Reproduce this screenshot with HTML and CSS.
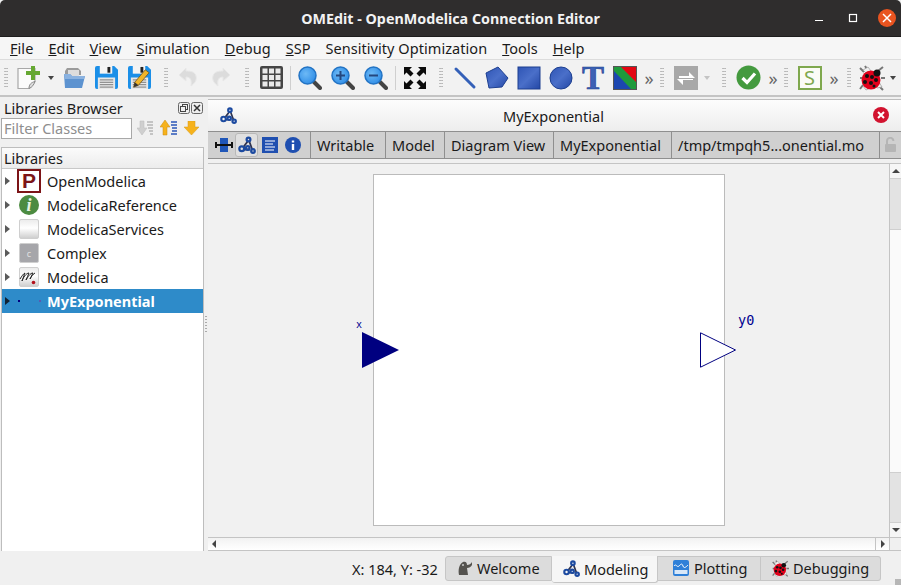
FILE: index.html
```html
<!DOCTYPE html>
<html lang="en">
<head>
    <meta charset="UTF-8">
    <title>OMEdit - OpenModelica Connection Editor</title>
    <link rel="stylesheet" href="styles.css">
</head>
<body>
    <svg class="defs" width="0" height="0">
        <defs>
            <linearGradient id="blue" x1="0" y1="0" x2="1" y2="1">
                <stop offset="0" stop-color="#2f55b5"/>
                <stop offset="0.5" stop-color="#4a6fc9"/>
                <stop offset="1" stop-color="#2347a5"/>
            </linearGradient>
            <radialGradient id="lens" cx="0.4" cy="0.4" r="0.7">
                <stop offset="0" stop-color="#6db9f5"/>
                <stop offset="1" stop-color="#2a8ae6"/>
            </radialGradient>
            <symbol id="conn" viewBox="0 0 24 24">
                <path d="M13 7 7 15M15 7 19 18M8 18h8" stroke="#2f3450" stroke-width="2.400" fill="none"/>
                <g fill="none" stroke="#1c4aa0" stroke-width="3">
                    <circle cx="14" cy="4.500" r="2.500"/>
                    <circle cx="5" cy="17" r="3.200"/>
                    <circle cx="13" cy="16" r="2.400"/>
                    <circle cx="20" cy="20" r="2.400"/>
                </g>
            </symbol>
            <symbol id="lady" viewBox="0 0 26 26">
                <path d="M5 7 1 3M8 4 6 1M19 6 24 2M4 20 1 24M20 21 24 25M22 13h4M1 13h3" stroke="#777" stroke-width="2"/>
                <path d="M4 5 9 2l3 4-4 3zM4 21l4-3 3 5-4 2zM18 23l-2-3 4-3 3 5z" fill="#eee" stroke="#999" stroke-width=".7"/>
                <circle cx="12" cy="15" r="9.500" fill="#e3001b"/>
                <circle cx="18" cy="8" r="3.500" fill="#111"/>
                <g fill="#111">
                    <circle cx="8" cy="11" r="2"/><circle cx="13" cy="12" r="2"/><circle cx="6" cy="17" r="2"/>
                    <circle cx="12" cy="18" r="2"/><circle cx="17" cy="15" r="2"/><circle cx="15" cy="21" r="1.500"/>
                </g>
            </symbol>
            <symbol id="floppy" viewBox="0 0 24 24">
                <path d="M2 0h18l4 4v18a2 2 0 0 1-2 2H2a2 2 0 0 1-2-2V2a2 2 0 0 1 2-2z" fill="#1b8fe8"/>
                <path d="M5 0h13v8H5z" fill="#f4f4f4"/>
                <path d="M13 1h3v6h-3z" fill="#222"/>
                <path d="M3 12h18v12H3z" fill="#e8e8e8"/>
                <path d="M5 14.500h14M5 17h14M5 19.500h14M5 22h14" stroke="#777" stroke-width="1"/>
            </symbol>
        </defs>
    </svg>

    <header class="titlebar">
        <span class="title">OMEdit - OpenModelica Connection Editor</span>
        <div class="winbtns">
            <svg class="winmin" width="12" height="12" viewBox="0 0 12 12"><path d="M2 8.500h8" stroke="#fff" stroke-width="1"/></svg>
            <svg width="12" height="12" viewBox="0 0 12 12"><rect x="2.500" y="2.500" width="7" height="7" fill="none" stroke="#fff" stroke-width="1.200"/></svg>
            <span class="winclose"><svg width="10" height="10" viewBox="0 0 10 10"><path d="M1 1l8 8M9 1l-8 8" stroke="#fff" stroke-width="1.500"/></svg></span>
        </div>
    </header>

    <nav class="menubar">
        <a><u>F</u>ile</a>
        <a><u>E</u>dit</a>
        <a><u>V</u>iew</a>
        <a><u>S</u>imulation</a>
        <a><u>D</u>ebug</a>
        <a><u>S</u>SP</a>
        <a>Sensitivity Optimization</a>
        <a><u>T</u>ools</a>
        <a><u>H</u>elp</a>
    </nav>

    <div class="toolbar">
        <span class="grip first"></span>
        <span class="tool tool-new">
            <svg width="24" height="24" viewBox="0 0 24 24">
                <path d="M1 2.500h17v13l-6 7H1z" fill="#fbfbfb" stroke="#a8a8a8" stroke-width="1.200"/>
                <path d="M12 22.500c0-4 2-6 6-7-1 3-3 6-6 7z" fill="#ddd" stroke="#888"/>
                <path d="M14 0h4v5h5v4h-5v5h-4V9H9V5h5z" fill="#66a832"/>
            </svg>
        </span>
        <span class="drop"></span>
        <span class="tool">
            <svg width="24" height="24" viewBox="0 0 24 24">
                <path d="M3 5l2-3h11l3 3v4H3z" fill="#9b9b9b"/>
                <path d="M6 4h11v6H6z" fill="#ddd"/>
                <path d="M2 8h6l2 2h13l-3 12H3z" fill="#5d93d0"/>
                <path d="M2 8h6l2 2h13l-1 3H3z" fill="#8ab2e0"/>
            </svg>
        </span>
        <span class="tool"><svg width="23" height="23"><use href="#floppy"/></svg></span>
        <span class="tool">
            <svg width="23" height="23" viewBox="0 0 24 24">
                <use href="#floppy" width="24" height="24"/>
                <path d="M18 4l4 3-11 13-5 2 1-5z" fill="#f0b429" stroke="#6b5320" stroke-width=".8"/>
                <path d="M6 22l1-5 4 3z" fill="#333"/>
            </svg>
        </span>
        <span class="grip g2"></span>
        <span class="tool">
            <svg width="20" height="24" viewBox="0 0 20 24">
                <path d="M8 2 1 9l7 6v-4c4 0 6 2 5 9 4-3 6-6 5-10-1-4-5-5-10-5z" fill="#dcdcdc" stroke="#e8e8e8"/>
            </svg>
        </span>
        <span class="tool">
            <svg width="20" height="24" viewBox="0 0 20 24">
                <path d="M12 2l7 7-7 6v-4c-4 0-6 2-5 9-4-3-6-6-5-10 1-4 5-5 10-5z" fill="#dcdcdc" stroke="#e8e8e8"/>
            </svg>
        </span>
        <span class="grip g3"></span>
        <span class="tool t32">
            <svg width="23" height="23" viewBox="0 0 23 23">
                <rect width="23" height="23" rx="2" fill="#454545"/>
                <g fill="#e9e9e9">
                    <rect x="2.500" y="2.500" width="5" height="5"/><rect x="9" y="2.500" width="5" height="5"/><rect x="15.500" y="2.500" width="5" height="5"/>
                    <rect x="2.500" y="9" width="5" height="5"/><rect x="9" y="9" width="5" height="5"/><rect x="15.500" y="9" width="5" height="5"/>
                    <rect x="2.500" y="15.500" width="5" height="5"/><rect x="9" y="15.500" width="5" height="5"/><rect x="15.500" y="15.500" width="5" height="5"/>
                </g>
            </svg>
        </span>
        <span class="vsep"></span>
        <span class="tool">
            <svg width="24" height="24" viewBox="0 0 24 24">
                <path d="M14 14l8 8" stroke="#444" stroke-width="4" stroke-linecap="round"/>
                <circle cx="9.500" cy="9.500" r="8.500" fill="url(#lens)" stroke="#2273c4" stroke-width="1.500"/>
            </svg>
        </span>
        <span class="tool">
            <svg width="24" height="24" viewBox="0 0 24 24">
                <path d="M14 14l8 8" stroke="#444" stroke-width="4" stroke-linecap="round"/>
                <circle cx="9.500" cy="9.500" r="8.500" fill="url(#lens)" stroke="#2273c4" stroke-width="1.500"/>
                <path d="M5 9.500h9M9.500 5v9" stroke="#24477f" stroke-width="2"/>
            </svg>
        </span>
        <span class="tool">
            <svg width="24" height="24" viewBox="0 0 24 24">
                <path d="M14 14l8 8" stroke="#444" stroke-width="4" stroke-linecap="round"/>
                <circle cx="9.500" cy="9.500" r="8.500" fill="url(#lens)" stroke="#2273c4" stroke-width="1.500"/>
                <path d="M5 9.500h9" stroke="#24477f" stroke-width="2"/>
            </svg>
        </span>
        <span class="vsep"></span>
        <span class="tool">
            <svg width="24" height="24" viewBox="0 0 24 24" fill="#0c0c0c">
                <path d="M1 1h8L6.500 3.500 10.500 7.500l-3 3-4-4L1 9zM23 1v8l-2.500-2.500-4 4-3-3 4-4L15 1zM1 23v-8l2.500 2.500 4-4 3 3-4 4L9 23zM23 23h-8l2.500-2.500-4-4 3-3 4 4L23 15z"/>
            </svg>
        </span>
        <span class="grip g4"></span>
        <span class="tool t32">
            <svg width="24" height="24" viewBox="0 0 24 24"><path d="M3 3l18 18" stroke="#3460b8" stroke-width="3" stroke-linecap="round"/></svg>
        </span>
        <span class="tool t32">
            <svg width="24" height="24" viewBox="0 0 24 24"><path d="M13 1l10 11-6 9-13 1L1 7z" fill="url(#blue)" stroke="#1d3f90"/></svg>
        </span>
        <span class="tool t32">
            <svg width="24" height="24" viewBox="0 0 24 24"><rect x="1" y="1" width="22" height="22" fill="url(#blue)" stroke="#1d3f90"/></svg>
        </span>
        <span class="tool t32">
            <svg width="24" height="24" viewBox="0 0 24 24"><circle cx="12" cy="12" r="11" fill="url(#blue)" stroke="#1d3f90"/></svg>
        </span>
        <span class="tool t32">
            <svg width="24" height="36" viewBox="0 0 24 36"><text x="12" y="29" class="icon-t">T</text></svg>
        </span>
        <span class="tool t32">
            <svg width="24" height="24" viewBox="0 0 24 24">
                <rect width="24" height="24" fill="#555"/>
                <path d="M1 1h22v22H1z" fill="#1f9a3c"/>
                <path d="M8 1h15v15z" fill="#e30613"/>
                <path d="M1 5v18h17z" fill="#1c47b0"/>
            </svg>
        </span>
        <span class="more">»</span>
        <span class="grip g5"></span>
        <span class="tool">
            <svg width="24" height="24" viewBox="0 0 24 24">
                <rect width="24" height="24" fill="#a8a8a8"/>
                <path d="M5 9h10V5l6 6H5zM19 13H9v5l-6-6h16z" fill="#fff" transform="translate(0 1)"/>
            </svg>
        </span>
        <span class="drop off"></span>
        <span class="grip g6"></span>
        <span class="tool">
            <svg width="25" height="25" viewBox="0 0 25 25">
                <circle cx="12.500" cy="12.500" r="12" fill="#449a3f"/>
                <path d="M6.500 13l4.500 4.500 8-9" fill="none" stroke="#fff" stroke-width="3.200"/>
            </svg>
        </span>
        <span class="more">»</span>
        <span class="grip g7"></span>
        <span class="tool"><span class="icon-s">S</span></span>
        <span class="more m2">»</span>
        <span class="grip g8"></span>
        <span class="tool"><svg width="26" height="26"><use href="#lady"/></svg></span>
        <span class="drop"></span>
    </div>

    <div class="workspace">
        <aside class="dock">
            <div class="dock-title">
                <span>Libraries Browser</span>
                <span class="dock-btns">
                    <svg width="12" height="12" viewBox="0 0 12 12"><rect x=".5" y=".5" width="11" height="11" rx="2" fill="#eee" stroke="#666"/><rect x="4.500" y="2.500" width="5" height="5" fill="none" stroke="#444"/><rect x="2.500" y="4.500" width="5" height="5" fill="#eee" stroke="#444"/></svg>
                    <svg width="12" height="12" viewBox="0 0 12 12"><rect x=".5" y=".5" width="11" height="11" rx="2" fill="#eee" stroke="#666"/><path d="M3 3l6 6M9 3l-6 6" stroke="#333" stroke-width="1.500"/></svg>
                </span>
            </div>
            <div class="filter-row">
                <input class="filter" placeholder="Filter Classes">
                <svg width="16" height="16" viewBox="0 0 16 16"><path d="M3 1h4v7h3l-5 7-5-7h3z" fill="#cfcfcf" stroke="#bbb" stroke-width=".5"/><path d="M10 2h6M10 5h6M11 8h5M12 11h4M13 14h3" stroke="#b5b5b5" stroke-width="1.500"/></svg>
                <svg width="17" height="16" viewBox="0 0 17 16"><path d="M5 0l5 7H7v8H3V7H0z" fill="#f6b21c" stroke="#c98a10" stroke-width=".5"/><path d="M11 2h6M11 5h6M12 8h5M12 11h5M11 14h6" stroke="#2b57b8" stroke-width="1.500"/></svg>
                <svg width="15" height="14" viewBox="0 0 15 14"><path d="M4 0h7v6h4l-7.500 8L0 6h4z" fill="#f6b21c" stroke="#d79a18" stroke-width=".5"/></svg>
            </div>
            <div class="tree">
                <div class="tree-head">Libraries</div>
                <div class="tree-row">
                    <span class="arrow"></span>
                    <svg class="tree-icon" width="24" height="24" viewBox="0 0 24 24"><rect x="1" y="1" width="22" height="22" fill="#fff" stroke="#7c1417" stroke-width="2"/><text x="12" y="19" class="icon-p">P</text></svg>
                    <span>OpenModelica</span>
                </div>
                <div class="tree-row">
                    <span class="arrow"></span>
                    <svg class="tree-icon" width="24" height="24" viewBox="0 0 24 24"><circle cx="12" cy="12" r="10" fill="#4c8b41"/><text x="12" y="18" class="icon-i">i</text></svg>
                    <span>ModelicaReference</span>
                </div>
                <div class="tree-row">
                    <span class="arrow"></span>
                    <span class="lib-box"></span>
                    <span>ModelicaServices</span>
                </div>
                <div class="tree-row">
                    <span class="arrow"></span>
                    <span class="lib-box lib-c">c</span>
                    <span>Complex</span>
                </div>
                <div class="tree-row">
                    <span class="arrow"></span>
                    <span class="lib-box">
                        <svg width="20" height="20" viewBox="0 0 20 20"><path d="M1 12c2-3 3-5 5-6-1 2-2 6-3 8 1-3 4-8 7-8-1 2-2 5-3 7 2-3 4-7 7-7-1 2-2 4-3 6 1-2 3-5 5-6" fill="none" stroke="#222" stroke-width="1"/><circle cx="14.500" cy="15.500" r="1.800" fill="#b3121d"/></svg>
                    </span>
                    <span>Modelica</span>
                </div>
                <div class="tree-row selected">
                    <span class="arrow"></span>
                    <svg class="tree-icon" width="24" height="24" viewBox="0 0 24 24"><rect x="1" y="11" width="2" height="2" fill="#000080"/><rect x="22" y="11" width="2" height="2" fill="#5a5ab0"/></svg>
                    <span>MyExponential</span>
                </div>
            </div>
        </aside>

        <div class="splitter"><span></span></div>

        <section class="editor">
            <div class="subwin-title">
                <svg width="17" height="17"><use href="#conn"/></svg>
                <span class="subwin-name">MyExponential</span>
                <span class="subwin-close"><svg width="8" height="8" viewBox="0 0 8 8"><path d="M1 1l6 6M7 1L1 7" stroke="#fff" stroke-width="2"/></svg></span>
            </div>
            <div class="infobar">
                <span class="view-btns">
                    <span class="view-btn">
                        <svg width="18" height="14" viewBox="0 0 18 14"><rect x="5" y="0" width="8" height="14" fill="#1f56b8"/><path d="M0 7h18" stroke="#111" stroke-width="2"/><path d="M1 4v6M17 4v6" stroke="#111" stroke-width="2"/></svg>
                    </span>
                    <span class="view-btn active"><svg width="18" height="18"><use href="#conn"/></svg></span>
                    <span class="view-btn">
                        <svg width="16" height="16" viewBox="0 0 16 16"><rect width="16" height="16" fill="#1f4fb0"/><path d="M3 4h10M3 7h8M3 10h10M3 13h9" stroke="#fff" stroke-width="1.200"/></svg>
                    </span>
                    <span class="view-btn">
                        <svg width="16" height="16" viewBox="0 0 16 16"><circle cx="8" cy="8" r="8" fill="#1f4fb0"/><path d="M8 3.500v2M8 7v6" stroke="#fff" stroke-width="2.400"/></svg>
                    </span>
                </span>
                <span class="info-cell c1">Writable</span>
                <span class="info-cell c2">Model</span>
                <span class="info-cell c3">Diagram View</span>
                <span class="info-cell c4">MyExponential</span>
                <span class="info-cell c5">/tmp/tmpqh5...onential.mo</span>
                <span class="lock">
                    <svg width="13" height="16" viewBox="0 0 13 16"><path d="M3 7V4a3.200 3.200 0 0 1 6.400 0" fill="none" stroke="#b5b5b5" stroke-width="2"/><rect x="1" y="7" width="11" height="8" rx="1" fill="#b5b5b5"/></svg>
                </span>
            </div>
            <div class="view-wrap">
                <div class="view-row">
                    <div class="canvas">
                        <div class="page"></div>
                        <span class="label-x">x</span>
                        <svg class="port-in" width="37" height="36" viewBox="0 0 37 36"><path d="M0 0l37 18L0 36z" fill="#000080"/></svg>
                        <svg class="port-out" width="37" height="36" viewBox="0 0 37 36"><path d="M.5 .8L35.500 18 .5 35.200z" fill="#fff" stroke="#000080"/></svg>
                        <span class="label-y">y0</span>
                    </div>
                    <div class="vscroll">
                        <span class="sb-btn"><span class="tri-up"></span></span>
                        <span class="sb-handle"></span>
                        <span class="sb-trough"></span>
                        <span class="sb-handle h2"></span>
                        <span class="sb-btn"><span class="tri-down"></span></span>
                    </div>
                </div>
                <div class="hscroll">
                    <span class="tri-left"></span>
                    <span class="hs-end">
                        <span class="hs-btn"><span class="tri-right"></span></span>
                        <span class="hs-corner"></span>
                    </span>
                </div>
            </div>
        </section>
    </div>

    <footer class="statusbar">
        <span class="coords">X: 184, Y: -32</span>
        <div class="tabs">
            <span class="tab t-welcome">
                <svg width="16" height="16" viewBox="0 0 16 16"><path d="M2 15c-1-5 0-11 4-13 3-1 4 1 4 3 2 0 4-1 5-3v3c-1 2-3 3-5 3l1 7z" fill="#55534f"/><circle cx="6" cy="5" r="1" fill="#ccc"/></svg>
                Welcome
            </span>
            <span class="tab t-modeling active"><svg width="17" height="17"><use href="#conn"/></svg>Modeling</span>
            <span class="tab t-plotting">
                <svg width="16" height="16" viewBox="0 0 16 16"><rect width="16" height="16" rx="2" fill="#2f80d8"/><path d="M1 6c2-3 3 2 5 0s3-3 4 0 3 1 5-1" fill="none" stroke="#fff"/><rect x="1.500" y="10" width="13" height="4" fill="#d9e8f8"/></svg>
                Plotting
            </span>
            <span class="tab t-debugging"><svg width="17" height="17"><use href="#lady"/></svg>Debugging</span>
        </div>
        <span class="sizegrip"></span>
    </footer>
</body>
</html>
```

FILE: styles.css
```css
* {
    box-sizing: border-box;
}
html, body {
    margin: 0;
    padding: 0;
    height: 585px;
    overflow: hidden;
}
body {
    width: 901px;
    display: flex;
    flex-direction: column;
    font-family: "Noto Sans", sans-serif;
    font-size: 14.5px;
    color: #1a1a1a;
    background-color: #f0f0f0;
}
.defs {
    position: absolute;
}

/* title bar */
.titlebar {
    height: 37px;
    flex: none;
    background-color: #2f2d2d;
    border-radius: 5px 5px 0 0;
    border-bottom: 1px solid #1e1d1d;
    display: flex;
    align-items: center;
    justify-content: center;
    position: relative;
}
.title {
    color: #f2f2f2;
    font-weight: 700;
    font-size: 14.3px;
}
.winbtns {
    position: absolute;
    right: 5px;
    top: 9px;
    display: flex;
    align-items: center;
    gap: 19px;
}
.winmin {
    margin-right: 3px;
}
.winclose {
    width: 18px;
    height: 18px;
    border-radius: 50%;
    background-color: #e95420;
    display: flex;
    align-items: center;
    justify-content: center;
}

/* menu */
.menubar {
    height: 23px;
    flex: none;
    background-color: #f6f6f6;
    border-bottom: 1px solid #dcdcdc;
    display: flex;
    align-items: center;
    padding-left: 10px;
    gap: 15px;
    letter-spacing: 0.05px;
}

/* toolbar */
.toolbar {
    height: 37px;
    flex: none;
    background-color: #f2f2f2;
    border-bottom: 2px solid #c4c4c4;
    display: flex;
    align-items: center;
}
.tool {
    width: 33px;
    height: 30px;
    flex: none;
    display: flex;
    align-items: center;
    justify-content: center;
}
.t32 {
    width: 32px;
}
.tool-new {
    width: 34px;
}
.grip {
    width: 4px;
    height: 22px;
    flex: none;
    margin: 0 3px;
    background-image: radial-gradient(circle, #b5b5b5 0.8px, transparent 1px);
    background-size: 2.500px 3px;
}
.grip.first {
    margin: 0 4px;
}
.g2 {
    margin: 0 3px 0 8px;
}
.g3 {
    margin: 0 6px 0 8px;
}
.g4 {
    margin: 0 6px 0 8px;
}
.g5 {
    margin: 0 5px 0 3px;
}
.g6 {
    margin: 0 6px 0 9px;
}
.g7 {
    margin: 0 5px 0 3px;
}
.g8 {
    margin: 0 4px 0 5px;
}
.vsep {
    width: 1px;
    height: 24px;
    flex: none;
    margin: 0 2px 0 3px;
    background-color: #cfcfcf;
}
.drop {
    width: 0;
    height: 0;
    flex: none;
    margin: 0 3px 0 2px;
    border-left: 3.500px solid transparent;
    border-right: 3.500px solid transparent;
    border-top: 4px solid #444;
}
.drop.off {
    border-top-color: #c4c4c4;
}
.more {
    width: 16px;
    flex: none;
    text-align: center;
    font-size: 18px;
    line-height: 22px;
    color: #666;
}
.icon-t {
    font-family: "Liberation Serif", serif;
    font-weight: 700;
    font-size: 33px;
    fill: #3c62b5;
    stroke: #1d3f90;
    stroke-width: 0.6px;
    text-anchor: middle;
}
.icon-s {
    width: 24px;
    height: 24px;
    border: 2px solid #7fa84e;
    background-color: #fbfbf6;
    color: #7fa84e;
    font-size: 20px;
    line-height: 19px;
    text-align: center;
}
.icon-p {
    font-family: "Liberation Sans", sans-serif;
    font-weight: 700;
    font-size: 21px;
    fill: #7c1417;
    text-anchor: middle;
}
.icon-i {
    font-family: "Liberation Serif", serif;
    font-weight: 700;
    font-style: italic;
    font-size: 18px;
    fill: #e8f2e4;
    text-anchor: middle;
}

/* main area */
.workspace {
    flex: 1;
    min-height: 0;
    display: flex;
}
.dock {
    width: 204px;
    flex: none;
    display: flex;
    flex-direction: column;
}
.dock-title {
    height: 20px;
    flex: none;
    padding: 2px 1px 0 4px;
    display: flex;
    justify-content: space-between;
    align-items: center;
}
.dock-btns {
    display: flex;
    gap: 1px;
}
.filter-row {
    height: 22px;
    flex: none;
    display: flex;
    align-items: center;
    padding-left: 1px;
}
.filter-row svg {
    flex: none;
    margin-left: 7px;
}
.filter {
    width: 131px;
    height: 21px;
    margin-right: -2px;
    border: 1px solid #a8a8a8;
    background-color: #fff;
    padding: 0 2px;
    font-family: inherit;
    font-size: 14.5px;
    outline: none;
}
.filter::placeholder {
    color: #8e8e8e;
}
.tree {
    flex: 1;
    margin: 8px 0 0 1px;
    border: 1px solid #bdbdbd;
    border-bottom: none;
    background-color: #fff;
}
.tree-head {
    height: 21px;
    padding-left: 2px;
    line-height: 21px;
    background: linear-gradient(#fbfbfb, #ececec);
    border-bottom: 1px solid #c8c8c8;
}
.tree-row {
    height: 24px;
    display: flex;
    align-items: center;
    padding-left: 3px;
}
.tree-row.selected {
    background-color: #2e8bc9;
    color: #fff;
    font-weight: 700;
}
.arrow {
    width: 0;
    height: 0;
    flex: none;
    margin-right: 7px;
    border-top: 4px solid transparent;
    border-bottom: 4px solid transparent;
    border-left: 5px solid #5a5a5a;
}
.selected .arrow {
    border-left-color: #123;
}
.tree-icon {
    flex: none;
    margin-right: 6px;
}
.lib-box {
    width: 20px;
    height: 20px;
    flex: none;
    margin: 0 8px 0 2px;
    border-radius: 2px;
    border: 1px solid #cfcfcf;
    background: linear-gradient(#ececec, #ffffff 45%, #cfcfcf);
    display: flex;
    align-items: center;
    justify-content: center;
}
.lib-box svg {
    flex: none;
}
.lib-c {
    background: #a6a6aa;
    color: #e0e0e0;
    font-size: 9px;
}
.splitter {
    width: 4px;
    flex: none;
    display: flex;
    align-items: center;
    justify-content: center;
}
.splitter span {
    width: 2px;
    height: 18px;
    background-image: radial-gradient(circle, #aaa 0.8px, transparent 1px);
    background-size: 2px 3px;
}

/* editor */
.editor {
    flex: 1;
    min-width: 0;
    display: flex;
    flex-direction: column;
    padding-top: 2px;
}
.subwin-title {
    height: 32px;
    flex: none;
    background: linear-gradient(#fdfdfd, #ededed);
    border-top: 1px solid #bdbdbd;
    display: flex;
    align-items: center;
    position: relative;
    padding-left: 12px;
}
.subwin-name {
    position: absolute;
    left: 295px;
}
.subwin-close {
    position: absolute;
    right: 12px;
    top: 7px;
    width: 16px;
    height: 16px;
    border-radius: 50%;
    background-color: #d2132f;
    display: flex;
    align-items: center;
    justify-content: center;
}
.infobar {
    height: 28px;
    flex: none;
    background-color: #d0d0d0;
    border-top: 1px solid #8f8f8f;
    border-bottom: 1px solid #8f8f8f;
    display: flex;
    align-items: center;
}
.view-btns {
    display: flex;
    align-items: center;
    gap: 0;
    width: 103px;
    flex: none;
    height: 100%;
    padding-left: 4px;
    border-right: 1px solid #8f8f8f;
}
.view-btn {
    width: 23px;
    height: 24px;
    flex: none;
    display: flex;
    align-items: center;
    justify-content: center;
    border-radius: 3px;
}
.view-btn.active {
    background-color: #e0e0e0;
    border: 1px solid #b8b8b8;
}
.info-cell {
    height: 100%;
    flex: none;
    display: flex;
    align-items: center;
    padding-left: 6px;
    border-right: 1px solid #8f8f8f;
}
.c1 {
    width: 75px;
}
.c2 {
    width: 59px;
}
.c3 {
    width: 109px;
}
.c4 {
    width: 118px;
}
.c5 {
    width: 208px;
}
.lock {
    flex: 1;
    display: flex;
    justify-content: center;
}
.view-wrap {
    flex: 1;
    min-height: 0;
    margin-top: 4px;
    border-top: 1px solid #c4c4c4;
    display: flex;
    flex-direction: column;
}
.view-row {
    flex: 1;
    min-height: 0;
    display: flex;
}
.canvas {
    flex: 1;
    background-color: #f1f1f1;
    position: relative;
    overflow: hidden;
}
.page {
    position: absolute;
    left: 165px;
    top: 10px;
    width: 352px;
    height: 352px;
    background-color: #fff;
    border: 1px solid #bbb;
}
.label-x {
    position: absolute;
    left: 148px;
    top: 155px;
    font-family: "DejaVu Sans Mono", monospace;
    font-size: 10px;
    color: #000090;
}
.label-y {
    position: absolute;
    left: 530px;
    top: 148px;
    font-family: "DejaVu Sans Mono", monospace;
    font-size: 13.5px;
    color: #000090;
}
.port-in {
    position: absolute;
    left: 154px;
    top: 168px;
}
.port-out {
    position: absolute;
    left: 492px;
    top: 168px;
}
.vscroll {
    width: 12px;
    flex: none;
    display: flex;
    flex-direction: column;
    background-color: #fafafa;
    border-left: 1px solid #c4c4c4;
}
.sb-btn {
    height: 14px;
    flex: none;
    display: flex;
    align-items: center;
    justify-content: center;
    background-color: #f6f6f6;
}
.sb-handle {
    height: 52px;
    flex: none;
    background-color: #e3e3e3;
    border-top: 1px solid #cfcfcf;
    border-bottom: 1px solid #cfcfcf;
}
.h2 {
    height: 51px;
}
.sb-trough {
    flex: 1;
}
.tri-up {
    border-left: 4px solid transparent;
    border-right: 4px solid transparent;
    border-bottom: 4px solid #444;
}
.tri-down {
    border-left: 4px solid transparent;
    border-right: 4px solid transparent;
    border-top: 4px solid #444;
}
.hscroll {
    height: 14px;
    flex: none;
    background: linear-gradient(#f2f2f2, #ffffff);
    border-top: 1px solid #c4c4c4;
    border-bottom: 1px solid #c4c4c4;
    display: flex;
    align-items: center;
    justify-content: space-between;
    padding-left: 4px;
}
.hs-end {
    height: 100%;
    display: flex;
}
.hs-btn {
    width: 14px;
    border-left: 1px solid #c4c4c4;
    display: flex;
    align-items: center;
    justify-content: center;
}
.hs-corner {
    width: 12px;
    border-left: 1px solid #c4c4c4;
    background-color: #f0f0f0;
}
.tri-left {
    border-top: 4px solid transparent;
    border-bottom: 4px solid transparent;
    border-right: 4px solid #444;
}
.tri-right {
    border-top: 4px solid transparent;
    border-bottom: 4px solid transparent;
    border-left: 4px solid #444;
}

/* status bar */
.statusbar {
    height: 34px;
    flex: none;
    display: flex;
    align-items: flex-start;
    padding: 5px 0 0 352px;
}
.coords {
    width: 93px;
    flex: none;
    line-height: 27px;
}
.tabs {
    display: flex;
}
.tab {
    height: 25px;
    flex: none;
    display: flex;
    align-items: center;
    gap: 4px;
    padding-left: 11px;
    padding-bottom: 1px;
    background-color: #dcdcdc;
    border: 1px solid #c6c6c6;
    border-left: none;
}
.tab:first-child {
    border-left: 1px solid #c6c6c6;
    border-radius: 3px 0 0 3px;
}
.tab:last-child {
    border-radius: 0 3px 3px 0;
}
.tab.active {
    height: 27px;
    background-color: #f6f6f6;
    border-radius: 0 0 3px 3px;
    border-top: none;
}
.t-welcome {
    width: 107px;
}
.t-modeling {
    width: 106px;
}
.t-plotting {
    width: 103px;
    padding-left: 15px;
    gap: 5px;
}
.t-debugging {
    width: 120px;
}
.sizegrip {
    width: 6px;
    height: 6px;
    margin: 23px 0 0 14px;
    background-image: radial-gradient(circle, #b5b5b5 0.7px, transparent 1px);
    background-size: 2px 2px;
}
```
